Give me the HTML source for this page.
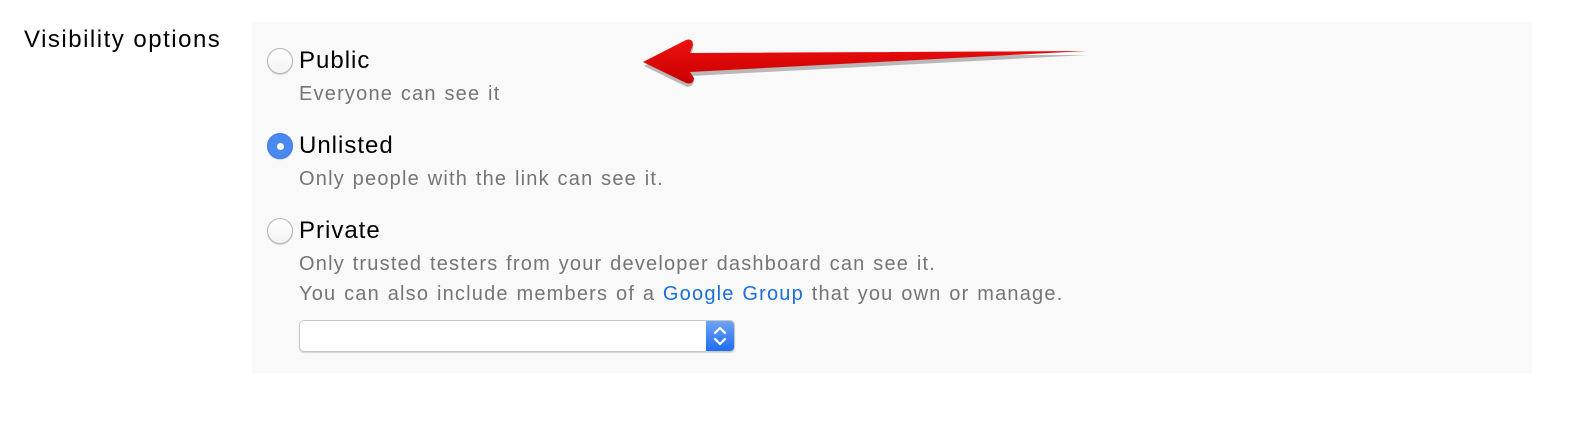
<!DOCTYPE html>
<html><head><meta charset="utf-8"><style>
body{margin:0;width:1588px;height:436px;background:#fff;position:relative;font-family:"Liberation Sans",sans-serif;overflow:hidden}
.a{position:absolute;white-space:nowrap}
.panel{position:absolute;left:252px;top:22px;width:1280px;height:351px;background:#f9f9f9}
.lbl{font-size:24px;color:#000;letter-spacing:1px}
.desc{font-size:20px;color:#757575;letter-spacing:1.2px;word-spacing:1px}
.radio{position:absolute;width:26px;height:26px;border-radius:50%;box-sizing:border-box;border:1px solid #b5b5b5;background:linear-gradient(#fff,#f3f3f3);box-shadow:0 1px 1px rgba(0,0,0,.15)}
.on{background:#4a8af0;border-color:#3b7be6}
.on:after{content:"";position:absolute;left:9px;top:9px;width:7px;height:7px;border-radius:50%;background:#fff}
</style></head><body>
<div class="a lbl" style="left:24px;top:26px;letter-spacing:1.5px">Visibility options</div>
<div class="panel"></div>
<div class="radio" style="left:267px;top:48px"></div>
<div class="a lbl" style="left:299px;top:47px">Public</div>
<div class="a desc" style="left:299px;top:83px">Everyone can see it</div>
<div class="radio on" style="left:267px;top:133px"></div>
<div class="a lbl" style="left:299px;top:132px">Unlisted</div>
<div class="a desc" style="left:299px;top:168px">Only people with the link can see it.</div>
<div class="radio" style="left:267px;top:218px"></div>
<div class="a lbl" style="left:299px;top:217px">Private</div>
<div class="a desc" style="left:299px;top:253px">Only trusted testers from your developer dashboard can see it.</div>
<div class="a desc" style="left:299px;top:283px">You can also include members of a <span style="color:#1a6fd8">Google Group</span> that you own or manage.</div>
<div class="a" style="left:299px;top:320px;width:436px;height:32px;box-sizing:border-box;border:1px solid #c8c8c8;border-radius:5px;background:#fff;box-shadow:0 1px 1px rgba(0,0,0,.15);overflow:hidden">
<div style="position:absolute;right:0;top:0;width:28px;height:100%;background:linear-gradient(#6fa3f5,#1f6df2)">
<svg width="28" height="32" viewBox="0 0 28 32" style="position:absolute;left:0;top:-1px"><path d="M9 13l5-5 5 5M9 19l5 5 5-5" fill="none" stroke="#fff" stroke-width="2.2" stroke-linecap="round" stroke-linejoin="round"/></svg></div></div>
<svg class="a" style="left:0;top:0" width="1588" height="436">
<defs><linearGradient id="g" x1="0" y1="0" x2="0" y2="1"><stop offset="0" stop-color="#f01010"/><stop offset="1" stop-color="#c80000"/></linearGradient></defs>
<path d="M1086 53 L690 74 L692 78 Q694 84 686 85 L643 64 L686 41 Q694 39 692 47 L690 53 Z" fill="#777" opacity=".5" transform="translate(1,2)"/>
<path d="M1086 51 L690 72 L694 78 Q694 85 686 83 L643 62 L686 40 Q693 38 693 45 L690 53 Z" fill="url(#g)"/>
</svg>
</body></html>
